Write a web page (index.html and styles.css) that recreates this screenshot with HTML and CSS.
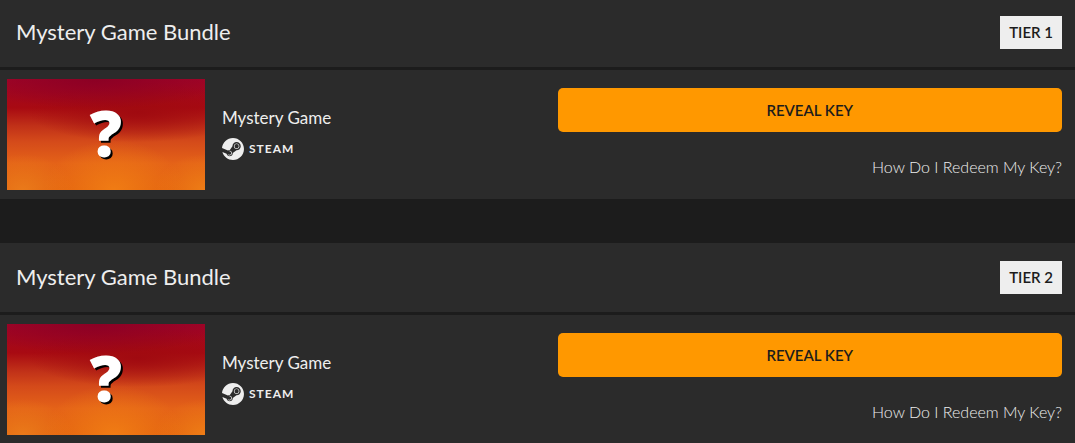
FILE: index.html
```html
<!DOCTYPE html>
<html lang="en">
<head>
    <meta charset="UTF-8">
    <meta name="viewport" content="width=device-width, initial-scale=1.0">
    <title>Mystery Game Bundle</title>
    <link rel="stylesheet" href="styles.css">
</head>
<body>
    <svg class="sprite" aria-hidden="true">
        <symbol id="steam" viewBox="0 0 24 24">
            <path d="M11.979 0C5.678 0 .511 4.86.022 11.037l6.432 2.658c.545-.371 1.203-.59 1.912-.59.063 0 .125.004.188.006l2.861-4.142V8.91c0-2.495 2.028-4.524 4.524-4.524 2.494 0 4.524 2.031 4.524 4.527s-2.03 4.525-4.524 4.525h-.105l-4.076 2.911c0 .052.004.105.004.159 0 1.875-1.515 3.396-3.39 3.396-1.635 0-3.016-1.173-3.331-2.727L.436 15.27C1.862 20.307 6.486 24 11.979 24c6.627 0 11.999-5.373 11.999-12S18.605 0 11.979 0zM7.54 18.21l-1.473-.61c.262.543.714.999 1.314 1.25 1.297.539 2.793-.076 3.332-1.375.263-.63.264-1.319.005-1.949s-.75-1.121-1.377-1.383c-.624-.26-1.29-.249-1.878-.03l1.523.63c.956.4 1.409 1.5 1.009 2.455-.397.957-1.497 1.41-2.454 1.012H7.54zm11.415-9.303c0-1.662-1.353-3.015-3.015-3.015-1.665 0-3.015 1.353-3.015 3.015 0 1.665 1.35 3.015 3.015 3.015 1.663 0 3.015-1.35 3.015-3.015zm-5.273-.005c0-1.252 1.013-2.266 2.265-2.266 1.249 0 2.266 1.014 2.266 2.266 0 1.251-1.017 2.265-2.266 2.265-1.253 0-2.265-1.014-2.265-2.265z"/>
        </symbol>
    </svg>

    <main class="order">
        <section class="bundle">
            <header class="bundle-header">
                <h2 class="bundle-title">Mystery Game Bundle</h2>
                <span class="tier">TIER 1</span>
            </header>
            <div class="bundle-body">
                <div class="product">
                    <div class="cover">?</div>
                    <div class="product-info">
                        <h3 class="product-name">Mystery Game</h3>
                        <div class="platform">
                            <svg class="platform-icon"><use href="#steam"/></svg>
                            <span>STEAM</span>
                        </div>
                    </div>
                </div>
                <div class="actions">
                    <button class="reveal" type="button">REVEAL KEY</button>
                    <a class="help" href="#">How Do I Redeem My Key?</a>
                </div>
            </div>
        </section>

        <section class="bundle">
            <header class="bundle-header">
                <h2 class="bundle-title">Mystery Game Bundle</h2>
                <span class="tier">TIER 2</span>
            </header>
            <div class="bundle-body">
                <div class="product">
                    <div class="cover">?</div>
                    <div class="product-info">
                        <h3 class="product-name">Mystery Game</h3>
                        <div class="platform">
                            <svg class="platform-icon"><use href="#steam"/></svg>
                            <span>STEAM</span>
                        </div>
                    </div>
                </div>
                <div class="actions">
                    <button class="reveal" type="button">REVEAL KEY</button>
                    <a class="help" href="#">How Do I Redeem My Key?</a>
                </div>
            </div>
        </section>
    </main>
</body>
</html>
```

FILE: styles.css
```css
* {
    box-sizing: border-box;
}

body {
    margin: 0;
    font-family: Lato, sans-serif;
    background-color: #1c1c1c;
    color: #eee;
}

.sprite {
    display: none;
}

.order {
    display: flex;
    flex-direction: column;
    gap: 44px;
    margin-top: -2px;
}

.bundle {
    background-color: #2b2b2b;
}

.bundle-header {
    display: flex;
    justify-content: space-between;
    align-items: flex-start;
    padding: 18px 13px 18px 16px;
    border-bottom: 3px solid #1c1c1c;
}

.bundle-title {
    margin: 0;
    font-size: 22px;
    font-weight: 400;
    line-height: 31px;
}

.tier {
    padding: 0 9px 1px;
    background-color: #eee;
    color: #1c1c1c;
    font-size: 15px;
    font-weight: 600;
    line-height: 32px;
}

.bundle-body {
    display: grid;
    grid-template-columns: 1fr 1fr;
}

.product {
    display: flex;
    align-items: center;
    gap: 17px;
    padding: 9px 7px;
}

.cover {
    width: 198px;
    height: 111px;
    background:
        radial-gradient(ellipse 70px 50px at 54% 100%, #f07c14, transparent),
        radial-gradient(ellipse 50px 36px at 100% 100%, #ee7d16, transparent),
        radial-gradient(ellipse 50px 36px at 8% 100%, #ea7a1a, transparent),
        radial-gradient(ellipse 130px 30px at 45% 0, #8c0024, transparent),
        radial-gradient(ellipse 110px 30px at 66% 30%, #a00a10, transparent),
        linear-gradient(#a00428 0%, #a80a12 26%, #c03018 42%, #d44a1a 56%, #e46218 76%, #e2600f 100%);
    color: #fff;
    font-family: "Open Sans", sans-serif;
    font-size: 64px;
    font-weight: 800;
    line-height: 108px;
    text-align: center;
    text-shadow: 2px 2px 0 #000;
}

.product-info {
    padding-bottom: 4px;
}

.product-name {
    margin: 0 0 8px;
    font-size: 17px;
    font-weight: 400;
    line-height: 24px;
}

.platform {
    display: flex;
    align-items: center;
    gap: 5px;
    font-size: 12px;
    font-weight: 700;
    letter-spacing: 1px;
}

.platform-icon {
    width: 22px;
    height: 22px;
    fill: #eee;
}

.actions {
    display: flex;
    flex-direction: column;
    align-items: flex-end;
    gap: 23px;
    padding: 18px 13px 18px 20px;
}

.reveal {
    width: 100%;
    height: 44px;
    padding: 0 0 1px;
    border: none;
    border-radius: 5px;
    background-color: #ff9800;
    color: #1c1c1c;
    font-family: inherit;
    font-size: 15px;
    font-weight: 600;
    cursor: pointer;
}

.help {
    color: #eee;
    font-size: 16px;
    font-weight: 300;
    line-height: 24px;
    text-decoration: none;
}
```
